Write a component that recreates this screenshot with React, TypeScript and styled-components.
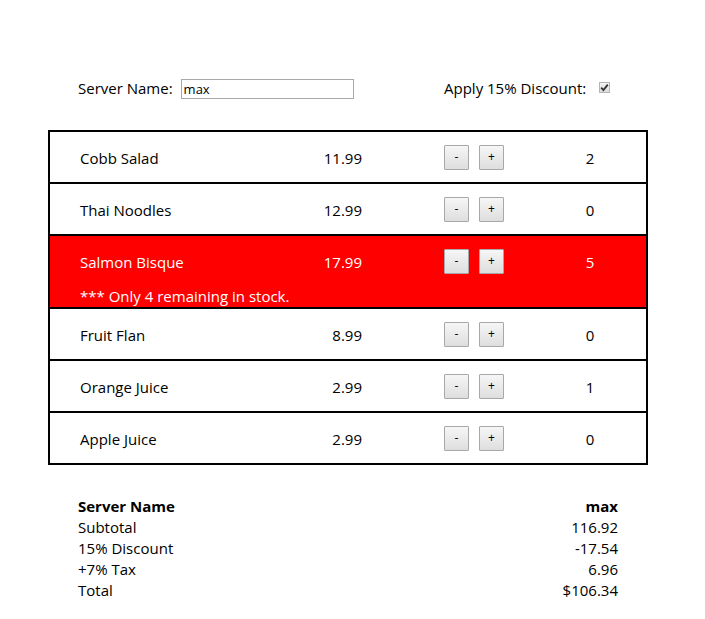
import React, { useState } from "react";
import styled, { createGlobalStyle } from "styled-components";

const Global = createGlobalStyle`
  html, body { margin: 0; padding: 0; background: #fff; }
  body {
    font-family: "Open Sans", "Noto Sans", sans-serif;
    font-size: 15px;
    color: #000;
  }
`;

const Page = styled.div`
  padding: 68px 0 0 48px;
  width: 600px;
`;

const FormRow = styled.div`
  display: grid;
  grid-template-columns: 366px 1fr;
  padding-left: 30px;
  height: 40px;
  align-items: center;
`;

const Field = styled.label`
  display: flex;
  align-items: center;
  gap: 8px;
  font-size: 15px;
`;

const TextInput = styled.input`
  width: 167px;
  height: 16px;
  margin-top: 1px;
  border: 1px solid #a9a9a9;
  padding: 1px 2px;
  font-family: "Open Sans", "Noto Sans", sans-serif;
  font-size: 13px;
  outline: none;
`;

const CheckBox = styled.span`
  display: inline-flex;
  align-items: center;
  justify-content: center;
  width: 9px;
  height: 9px;
  border: 1px solid #b5b5b5;
  background: linear-gradient(#f4f4f4, #dcdcdc);
  margin-left: 5px;
  margin-top: -1px;
`;

const Table = styled.div`
  margin-top: 22px;
  border: 2px solid #000;
`;

const Row = styled.div<{ $alert?: boolean }>`
  display: grid;
  grid-template-columns: 250px 62px 82px 96px 100px;
  grid-template-rows: ${(p) => (p.$alert ? "50px 21px" : "50px")};
  align-items: center;
  background: ${(p) => (p.$alert ? "#ff0000" : "#fff")};
  color: ${(p) => (p.$alert ? "#fff" : "#000")};
  border-top: 2px solid #000;
  line-height: 22px;
  &:first-child { border-top: none; }
`;

const Name = styled.div`
  padding-left: 30px;
  padding-top: 2px;
`;

const Price = styled.div`
  text-align: right;
  padding-top: 2px;
`;

const Buttons = styled.div`
  grid-column: 4;
  display: flex;
  gap: 10px;
`;

const QtyButton = styled.button`
  width: 25px;
  height: 25px;
  padding: 0;
  border: 1px solid #a8a8a8;
  border-radius: 1px;
  background: linear-gradient(#f6f6f6, #dedede);
  color: #000;
  font-family: "Open Sans", "Noto Sans", sans-serif;
  font-size: 12px;
  line-height: 22px;
  cursor: pointer;
`;

const Count = styled.div`
  text-align: center;
  padding-top: 2px;
`;

const Warning = styled.div`
  grid-column: 1 / -1;
  padding-left: 30px;
  line-height: 20px;
  align-self: end;
  padding-bottom: 1px;
`;

const Summary = styled.div`
  margin-top: 31px;
  padding: 0 30px;
  display: grid;
  grid-template-columns: 1fr auto;
  line-height: 21px;
`;

const SumLabel = styled.div<{ $bold?: boolean }>`
  font-weight: ${(p) => (p.$bold ? 700 : 400)};
`;

const SumValue = styled.div<{ $bold?: boolean }>`
  text-align: right;
  font-weight: ${(p) => (p.$bold ? 700 : 400)};
`;

const items = [
  { name: "Cobb Salad", price: "11.99", qty: 2 },
  { name: "Thai Noodles", price: "12.99", qty: 0 },
  { name: "Salmon Bisque", price: "17.99", qty: 5, warn: "*** Only 4 remaining in stock." },
  { name: "Fruit Flan", price: "8.99", qty: 0 },
  { name: "Orange Juice", price: "2.99", qty: 1 },
  { name: "Apple Juice", price: "2.99", qty: 0 },
];

export default function App() {
  const [server, setServer] = useState("max");
  return (
    <Page>
      <Global />
      <FormRow>
        <Field>
          Server Name:
          <TextInput value={server} onChange={(e) => setServer(e.target.value)} />
        </Field>
        <Field>
          Apply 15% Discount:
          <CheckBox role="checkbox" aria-checked="true">
            <svg width="9" height="9" viewBox="0 0 9 9">
              <path d="M1.2 4.6 L3.4 7 L7.8 1.6" stroke="#333" strokeWidth="1.8" fill="none" />
            </svg>
          </CheckBox>
        </Field>
      </FormRow>
      <Table>
        {items.map((it) => (
          <Row key={it.name} $alert={!!it.warn}>
            <Name>{it.name}</Name>
            <Price>{it.price}</Price>
            <Buttons>
              <QtyButton>-</QtyButton>
              <QtyButton>+</QtyButton>
            </Buttons>
            <Count>{it.qty}</Count>
            {it.warn && <Warning>{it.warn}</Warning>}
          </Row>
        ))}
      </Table>
      <Summary>
        <SumLabel $bold>Server Name</SumLabel>
        <SumValue $bold>{server}</SumValue>
        <SumLabel>Subtotal</SumLabel>
        <SumValue>116.92</SumValue>
        <SumLabel>15% Discount</SumLabel>
        <SumValue>-17.54</SumValue>
        <SumLabel>+7% Tax</SumLabel>
        <SumValue>6.96</SumValue>
        <SumLabel>Total</SumLabel>
        <SumValue>$106.34</SumValue>
      </Summary>
    </Page>
  );
}
